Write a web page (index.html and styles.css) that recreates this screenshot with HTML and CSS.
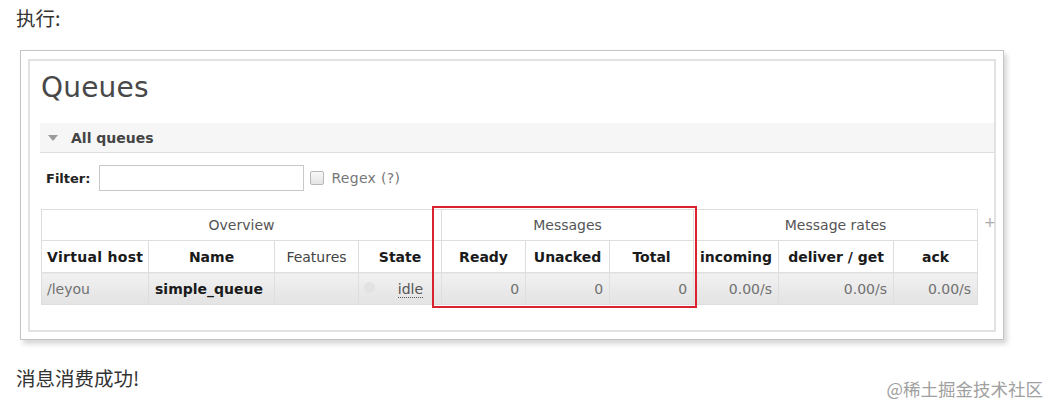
FILE: index.html
```html
<!DOCTYPE html>
<html lang="zh">
<head>
<meta charset="utf-8">
<title>Queues</title>
<link rel="stylesheet" href="styles.css">
</head>
<body>
<div class="article">
  <p class="para">执行:</p>
  <div class="shot">
    <div class="panel">
      <h1 class="title">Queues</h1>
      <div class="section-bar"><span class="tri"></span><span class="section-title">All queues</span></div>
      <div class="filter-row">
        <span class="filter-label">Filter:</span>
        <span class="filter-input"></span>
        <span class="checkbox"></span>
        <span class="regex">Regex (?)</span>
      </div>
      <div class="table-row">
        <div class="table-wrap">
          <table class="queues">
            <colgroup>
              <col style="width:107px"><col style="width:126px"><col style="width:84px"><col style="width:83px">
              <col style="width:84px"><col style="width:84px"><col style="width:84px">
              <col style="width:85px"><col style="width:115px"><col style="width:84px">
            </colgroup>
            <thead>
              <tr class="group">
                <th colspan="4">Overview</th>
                <th colspan="3">Messages</th>
                <th colspan="3">Message rates</th>
              </tr>
              <tr class="cols">
                <th>Virtual host</th><th>Name</th><th class="light">Features</th><th>State</th>
                <th>Ready</th><th>Unacked</th><th>Total</th>
                <th>incoming</th><th>deliver / get</th><th>ack</th>
              </tr>
            </thead>
            <tbody>
              <tr class="data">
                <td class="left">/leyou</td>
                <td class="name">simple_queue</td>
                <td></td>
                <td class="state"><span class="dot"></span><abbr>idle</abbr></td>
                <td>0</td><td>0</td><td>0</td>
                <td>0.00/s</td><td>0.00/s</td><td>0.00/s</td>
              </tr>
            </tbody>
          </table>
          <div class="highlight"></div>
        </div>
        <span class="plus">+</span>
      </div>
    </div>
  </div>
  <div class="footer-line">
    <p class="para">消息消费成功!</p>
    <span class="watermark">@稀土掘金技术社区</span>
  </div>
</div>
</body>
</html>
```

FILE: styles.css
```css
html, body {
  margin: 0;
  padding: 0;
  background: #ffffff;
}

* {
  box-sizing: border-box;
}

.article {
  padding: 5px 8px 0 16px;
  font-family: "Noto Sans CJK SC", "Noto Sans", sans-serif;
  color: #333;
}

.para {
  margin: 0;
  font-size: 19.5px;
  line-height: 26px;
  color: #333;
}

.shot {
  margin: 19px 0 0 4px;
  width: 984px;
  height: 290px;
  border: 1px solid #c4c4c4;
  box-shadow: 3px 4px 5px rgba(0, 0, 0, 0.16);
  padding: 8px 7px 7px 7px;
  background: #fff;
}

.panel {
  border: 2px solid #e2e2e2;
  height: 273px;
  padding: 0 0 0 11px;
  font-family: "DejaVu Sans", Verdana, sans-serif;
  color: #484848;
}

.title {
  margin: 0;
  padding-top: 9px;
  font-size: 28px;
  font-weight: normal;
  line-height: 36px;
  color: #484848;
  letter-spacing: 0.2px;
}

.section-bar {
  margin: 17px 0 0 -1px;
  height: 30px;
  background: #f6f6f6;
  border-bottom: 1px solid #dddddd;
  display: flex;
  align-items: center;
  padding-left: 8px;
}

.tri {
  width: 0;
  height: 0;
  border-left: 5px solid transparent;
  border-right: 5px solid transparent;
  border-top: 6px solid #9a9a9a;
  margin-right: 13px;
  margin-top: 1px;
}

.section-title {
  font-size: 14px;
  font-weight: bold;
  color: #444;
}

.filter-row {
  display: flex;
  align-items: center;
  margin-top: 12px;
  height: 26px;
  padding-left: 5px;
}

.filter-label {
  font-size: 13px;
  color: #222;
  font-weight: bold;
  margin-right: 9px;
}

.filter-input {
  width: 205px;
  height: 26px;
  border: 1px solid #c8c8c8;
  background: #fff;
}

.checkbox {
  width: 14px;
  height: 14px;
  border: 1px solid #b8b8b8;
  border-radius: 2px;
  background: linear-gradient(#f8f8f8, #e4e4e4);
  margin-left: 6px;
  margin-right: 7px;
}

.regex {
  font-size: 14px;
  color: #777;
  letter-spacing: 0.3px;
}

.table-row {
  display: flex;
  align-items: flex-start;
  margin-top: 18px;
}

.table-wrap {
  position: relative;
}

.queues {
  border-collapse: collapse;
  table-layout: fixed;
  width: 936px;
  font-size: 14px;
}

.queues th,
.queues td {
  border: 1px solid #dedede;
  height: 31px;
  padding: 0 6px;
  white-space: nowrap;
  overflow: hidden;
}

.queues .group th {
  font-weight: normal;
  color: #555;
  font-size: 14px;
  text-align: center;
}

.queues .cols th {
  font-weight: bold;
  color: #1a1a1a;
  text-align: center;
  height: 32px;
}

.queues .cols th:first-child {
  text-align: left;
  padding-left: 5px;
  letter-spacing: 0.3px;
}

.queues .cols th.light {
  font-weight: normal;
  color: #444;
}

.queues .cols th:nth-child(8) {
  padding: 0 2px;
}

.queues .data td {
  background: linear-gradient(#f1f1f1, #e3e3e3);
  color: #707070;
  text-align: right;
  height: 32px;
}

.queues .data td.left {
  text-align: left;
  padding-left: 5px;
}

.queues .data td.name {
  text-align: left;
  font-weight: bold;
  color: #1a1a1a;
}

.queues .data td.state {
  position: relative;
  padding-right: 18px;
}

.dot {
  position: absolute;
  left: 5px;
  top: 9px;
  width: 11px;
  height: 11px;
  border-radius: 50%;
  background: #e2e2e2;
}

abbr {
  text-decoration: none;
  border-bottom: 1px dotted #555;
  color: #555;
}

.highlight {
  position: absolute;
  left: 391px;
  top: -3px;
  width: 265px;
  height: 102px;
  border: 2px solid #d9232e;
}

.plus {
  font-family: "DejaVu Sans", sans-serif;
  font-size: 14px;
  color: #aaa;
  margin-left: 6px;
  margin-top: 5px;
}

.footer-line {
  display: flex;
  justify-content: space-between;
  align-items: flex-start;
  margin-top: 25px;
}

.watermark {
  font-size: 17.5px;
  line-height: 24px;
  color: #a0a0a0;
  margin-top: 12px;
}
```
